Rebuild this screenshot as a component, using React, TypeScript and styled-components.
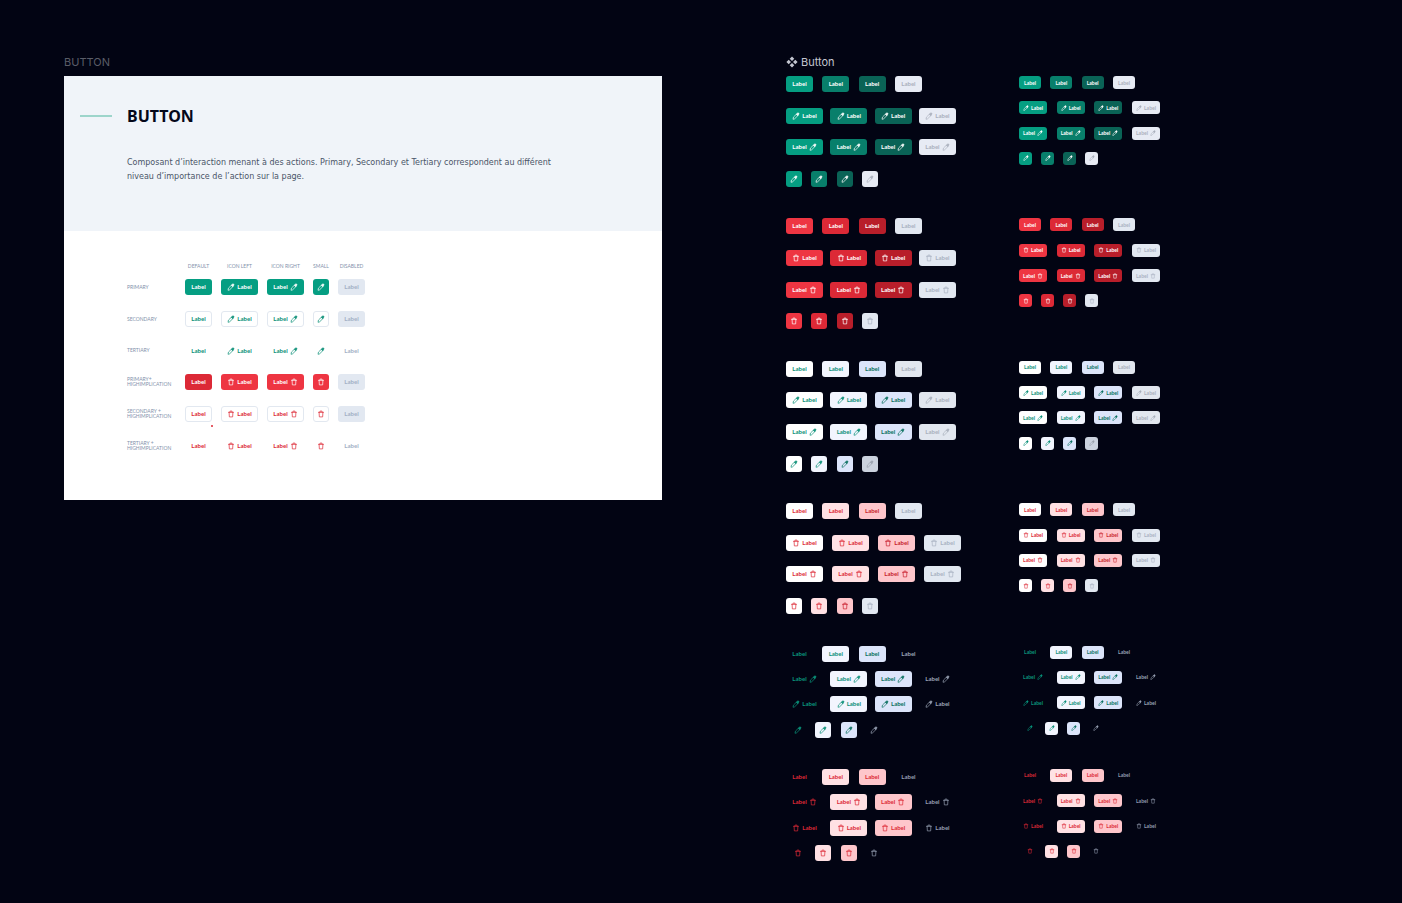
import React from "react";
import styled, { createGlobalStyle } from "styled-components";

const GlobalStyle = createGlobalStyle`
  *, *::before, *::after { box-sizing: border-box; }
  body {
    margin: 0;
    background: #020413;
    font-family: "Noto Sans", "Open Sans", sans-serif;
  }
`;

type Glyph = "pencil" | "trash";
type Kind = "label" | "left" | "right" | "small";
type Size = "large" | "medium";
type Tone = { bg: string; fg: string; border?: string };

/* ---------- page ---------- */

const Canvas = styled.main`
  display: grid;
  grid-template-columns: minmax(0, 598fr) minmax(0, 616fr);
  column-gap: 124px;
  align-items: start;
  padding: 54px 0 41px 64px;
`;

const LayerName = styled.h2<{ $component?: boolean }>`
  display: flex;
  align-items: center;
  gap: 3px;
  margin: 0 0 6px;
  font-family: Inter, sans-serif;
  font-size: 11px;
  line-height: 16px;
  font-weight: 400;
  color: ${(p) => (p.$component ? "#c3c6d0" : "#5a5d68")};
`;

/* ---------- documentation frame ---------- */

const Frame = styled.article`
  background: #ffffff;
`;

const Intro = styled.header`
  padding: 30px 63px 47px 16px;
  background: #f0f4f9;
`;

const TitleRow = styled.div`
  display: flex;
  align-items: center;
  gap: 15px;
  margin-bottom: 30px;
`;

const Accent = styled.span`
  width: 32px;
  height: 2px;
  background: #9dd5cb;
`;

const Title = styled.h1`
  margin: 0;
  font-size: 16px;
  line-height: 20px;
  font-weight: 700;
  color: #04081a;
`;

const Description = styled.p`
  margin: 0 0 0 47px;
  font-family: "DejaVu Sans", sans-serif;
  font-size: 8px;
  line-height: 14px;
  color: #4a5568;
`;

const Matrix = styled.table`
  margin: 0 63px;
  border-collapse: collapse;
  table-layout: fixed;
  width: 238px;
`;

const MatrixSection = styled.section`
  padding: 30px 0 39px;
`;

const Col = styled.col<{ $w: number }>`
  width: ${(p) => p.$w}px;
`;

const ColumnHead = styled.th`
  height: 10px;
  padding: 0 9px 0 0;
  font-family: Lato, sans-serif;
  font-size: 5px;
  line-height: 5px;
  font-weight: 400;
  text-align: center;
  white-space: nowrap;
  color: #8492ab;
  &:last-child { padding-right: 0; }
`;

const RowHead = styled.th`
  padding: 0;
  font-family: Lato, sans-serif;
  font-size: 5px;
  line-height: 5px;
  font-weight: 400;
  text-align: left;
  white-space: pre-line;
  color: #8492ab;
`;

const MatrixRow = styled.tr`
  height: 32px;
  &:nth-child(3n) { height: 31px; }
`;

const Cell = styled.td`
  position: relative;
  padding: 0;
  vertical-align: middle;
`;

const Dot = styled.span`
  position: absolute;
  left: 26px;
  bottom: 3px;
  width: 2px;
  height: 2px;
  border-radius: 1px;
  background: #dc2936;
`;

/* ---------- button ---------- */

const widths: Record<Size, Record<Kind, number>> = {
  large: { label: 27, left: 37, right: 37, small: 16 },
  medium: { label: 22, left: 28, right: 28, small: 13 },
};

const ButtonBase = styled.button<{ $kind: Kind; $size: Size; $tone: Tone }>`
  display: flex;
  flex: none;
  align-items: center;
  justify-content: center;
  flex-direction: ${(p) => (p.$kind === "right" ? "row-reverse" : "row")};
  gap: 2px;
  width: ${(p) => widths[p.$size][p.$kind]}px;
  height: ${(p) => (p.$size === "large" ? 16 : 13)}px;
  padding: 0;
  border: ${(p) => (p.$tone.border ? `1px solid ${p.$tone.border}` : "0")};
  border-radius: 3px;
  background: ${(p) => p.$tone.bg};
  color: ${(p) => p.$tone.fg};
  font-family: Lato, sans-serif;
  font-size: ${(p) => (p.$size === "large" ? 6 : 5)}px;
  line-height: 8px;
  font-weight: 700;
  cursor: pointer;
  &:disabled { cursor: default; }
`;

const Icon = styled.svg<{ $size: Size }>`
  flex: none;
  width: ${(p) => (p.$size === "large" ? 8 : 6)}px;
  height: ${(p) => (p.$size === "large" ? 8 : 6)}px;
  fill: none;
  stroke: currentColor;
  stroke-width: 1.4;
  stroke-linejoin: round;
  stroke-linecap: round;
`;

function ButtonIcon({ glyph, size }: { glyph: Glyph; size: Size }) {
  return (
    <Icon viewBox="0 0 16 16" $size={size} aria-hidden="true">
      {glyph === "pencil" ? (
        <>
          <path d="M2.2 13.8l.7-3.6 6.1-6.1 2.900 2.900-6.100 6.100z" />
          <path d="M9 4.100l1.900-1.800c.8-.7 1.900-.7 2.500 0s.6 1.700-.1 2.500L11.900 7z" fill="currentColor" />
        </>
      ) : (
        <path d="M3 4.600h10M5.900 4.400V2.200h4.200v2.200M4.200 4.800l.5 9h6.600l.5-9" />
      )}
    </Icon>
  );
}

type ButtonProps = { kind: Kind; tone: Tone; glyph: Glyph; size?: Size; disabled?: boolean };

function Button({ kind, tone, glyph, size = "large", disabled }: ButtonProps) {
  return (
    <ButtonBase
      type="button"
      $kind={kind}
      $size={size}
      $tone={tone}
      disabled={disabled}
      aria-label={kind === "small" ? (glyph === "pencil" ? "Edit" : "Delete") : undefined}
    >
      {kind !== "label" && <ButtonIcon glyph={glyph} size={size} />}
      {kind !== "small" && <span>Label</span>}
    </ButtonBase>
  );
}

/* ---------- matrix data ---------- */

const GREEN = "#059e82";
const RED = "#ee3542";
const LINE = "#e2e8f0";
const mutedFill: Tone = { bg: "#e2e8f1", fg: "#a3b0c5" };

const matrix: { name: string; glyph: Glyph; tone: Tone; first?: Tone; off: Tone; dot?: boolean }[] = [
  { name: "PRIMARY", glyph: "pencil", tone: { bg: GREEN, fg: "#ffffff" }, off: mutedFill },
  { name: "SECONDARY", glyph: "pencil", tone: { bg: "#ffffff", fg: "#0a8f77", border: LINE }, off: mutedFill },
  { name: "TERTIARY", glyph: "pencil", tone: { bg: "transparent", fg: "#0a8f77" }, off: { bg: "transparent", fg: "#a3b0c5" } },
  { name: "PRIMARY+\nHIGHIMPLICATION", glyph: "trash", tone: { bg: RED, fg: "#ffffff" }, first: { bg: "#dc2936", fg: "#ffffff" }, off: mutedFill },
  { name: "SECONDARY +\nHIGHIMPLICATION", glyph: "trash", tone: { bg: "#ffffff", fg: "#dc2936", border: LINE }, off: mutedFill, dot: true },
  { name: "TERTIARY +\nHIGHIMPLICATION", glyph: "trash", tone: { bg: "transparent", fg: "#dc2936" }, off: { bg: "transparent", fg: "#a3b0c5" } },
];

/* ---------- component sheet ---------- */

const Sheet = styled.div`
  display: grid;
  grid-template-columns: 233px 1fr;
  align-content: space-between;
  min-height: 785px;
`;

const Block = styled.div<{ $size: Size; $dense?: boolean }>`
  display: flex;
  flex-direction: column;
  justify-content: space-between;
  height: ${(p) => (p.$size === "medium" ? 89 : p.$dense ? 92 : 111)}px;
`;

const Row = styled.div<{ $width: number; $inset?: boolean }>`
  display: flex;
  justify-content: space-between;
  width: ${(p) => p.$width}px;
  margin-left: ${(p) => (p.$inset ? 4 : 0)}px;
`;

const rowWidths: Record<Size, Record<Kind, number>> = {
  large: { label: 136, left: 170, right: 170, small: 92 },
  medium: { label: 116, left: 141, right: 141, small: 79 },
};

type Group = { id: string; glyph: Glyph; tones: Tone[]; ghost?: boolean; wide?: boolean; smallOff?: Tone };

const groups: Group[] = [
  {
    id: "primary",
    glyph: "pencil",
    tones: [
      { bg: "#059e82", fg: "#ffffff" },
      { bg: "#087f6b", fg: "#ffffff" },
      { bg: "#0a6356", fg: "#ffffff" },
      { bg: "#e7ebf4", fg: "#aab0bd" },
    ],
  },
  {
    id: "primary-danger",
    glyph: "trash",
    tones: [
      { bg: "#ee3542", fg: "#ffffff" },
      { bg: "#dc2936", fg: "#ffffff" },
      { bg: "#b81e2a", fg: "#ffffff" },
      { bg: "#e2e8f1", fg: "#a9b2c2" },
    ],
  },
  {
    id: "secondary",
    glyph: "pencil",
    tones: [
      { bg: "#ffffff", fg: "#0a8f77" },
      { bg: "#f2f5fe", fg: "#0a8f77" },
      { bg: "#dce5fa", fg: "#08705f" },
      { bg: "#e2e7ef", fg: "#a9b0bc" },
    ],
    smallOff: { bg: "#cbd2de", fg: "#9aa1ad" },
  },
  {
    id: "secondary-danger",
    glyph: "trash",
    wide: true,
    tones: [
      { bg: "#ffffff", fg: "#dc2936" },
      { bg: "#ffe1e4", fg: "#dc2936" },
      { bg: "#fec6cb", fg: "#c81e2c" },
      { bg: "#e2e8f1", fg: "#a9b2c2" },
    ],
  },
  {
    id: "tertiary",
    glyph: "pencil",
    ghost: true,
    tones: [
      { bg: "transparent", fg: "#0a967c" },
      { bg: "#f2f5fe", fg: "#0a8f77" },
      { bg: "#dce5fa", fg: "#08705f" },
      { bg: "transparent", fg: "#9aa3b5" },
    ],
  },
  {
    id: "tertiary-danger",
    glyph: "trash",
    ghost: true,
    tones: [
      { bg: "transparent", fg: "#dc2936" },
      { bg: "#ffe1e4", fg: "#dc2936" },
      { bg: "#fec6cb", fg: "#dc2936" },
      { bg: "transparent", fg: "#949db0" },
    ],
  },
];

function VariantBlock({ group, size }: { group: Group; size: Size }) {
  const kinds: Kind[] = group.ghost ? ["label", "right", "left", "small"] : ["label", "left", "right", "small"];
  return (
    <Block $size={size} $dense={group.ghost}>
      {kinds.map((kind) => {
        const isIconRow = kind === "left" || kind === "right";
        const width = group.wide && isIconRow && size === "large" ? 175 : rowWidths[size][kind];
        return (
          <Row key={kind} $width={width} $inset={group.ghost && kind === "small"}>
            {group.tones.map((tone, i) => (
              <Button
                key={i}
                kind={kind}
                size={size}
                glyph={group.glyph}
                tone={i === 3 && kind === "small" && group.smallOff ? group.smallOff : tone}
                disabled={i === 3}
              />
            ))}
          </Row>
        );
      })}
    </Block>
  );
}

const ComponentMark = styled.svg`
  width: 12px;
  height: 12px;
  fill: currentColor;
`;

export default function App() {
  return (
    <>
      <GlobalStyle />
      <Canvas>
        <section>
          <LayerName>BUTTON</LayerName>
          <Frame>
            <Intro>
              <TitleRow>
                <Accent />
                <Title>BUTTON</Title>
              </TitleRow>
              <Description>
                Composant d’interaction menant à des actions. Primary, Secondary et Tertiary correspondent au différent
                <br />
                niveau d’importance de l’action sur la page.
              </Description>
            </Intro>
            <MatrixSection>
              <Matrix>
                <colgroup>
                  {[58, 36, 46, 46, 25, 27].map((w, i) => (
                    <Col key={i} $w={w} />
                  ))}
                </colgroup>
                <thead>
                  <tr>
                    <td />
                    {["DEFAULT", "ICON LEFT", "ICON RIGHT", "SMALL", "DISABLED"].map((name) => (
                      <ColumnHead key={name} scope="col">{name}</ColumnHead>
                    ))}
                  </tr>
                </thead>
                <tbody>
                  {matrix.map((row) => (
                    <MatrixRow key={row.name}>
                      <RowHead scope="row">{row.name}</RowHead>
                      <Cell>
                        <Button kind="label" glyph={row.glyph} tone={row.first ?? row.tone} />
                        {row.dot && <Dot />}
                      </Cell>
                      <Cell><Button kind="left" glyph={row.glyph} tone={row.tone} /></Cell>
                      <Cell><Button kind="right" glyph={row.glyph} tone={row.tone} /></Cell>
                      <Cell><Button kind="small" glyph={row.glyph} tone={row.tone} /></Cell>
                      <Cell><Button kind="label" glyph={row.glyph} tone={row.off} disabled /></Cell>
                    </MatrixRow>
                  ))}
                </tbody>
              </Matrix>
            </MatrixSection>
          </Frame>
        </section>

        <section>
          <LayerName $component>
            <ComponentMark viewBox="0 0 12 12" aria-hidden="true">
              <path d="M6 .4l2.300 2.300L6 5 3.700 2.700zM6 7l2.300 2.300L6 11.600 3.700 9.300zM2.700 3.700L5 6 2.700 8.300.4 6zM9.300 3.700L11.600 6 9.300 8.300 7 6z" />
            </ComponentMark>
            Button
          </LayerName>
          <Sheet>
            {groups.map((group) => (
              <React.Fragment key={group.id}>
                <VariantBlock group={group} size="large" />
                <VariantBlock group={group} size="medium" />
              </React.Fragment>
            ))}
          </Sheet>
        </section>
      </Canvas>
    </>
  );
}
